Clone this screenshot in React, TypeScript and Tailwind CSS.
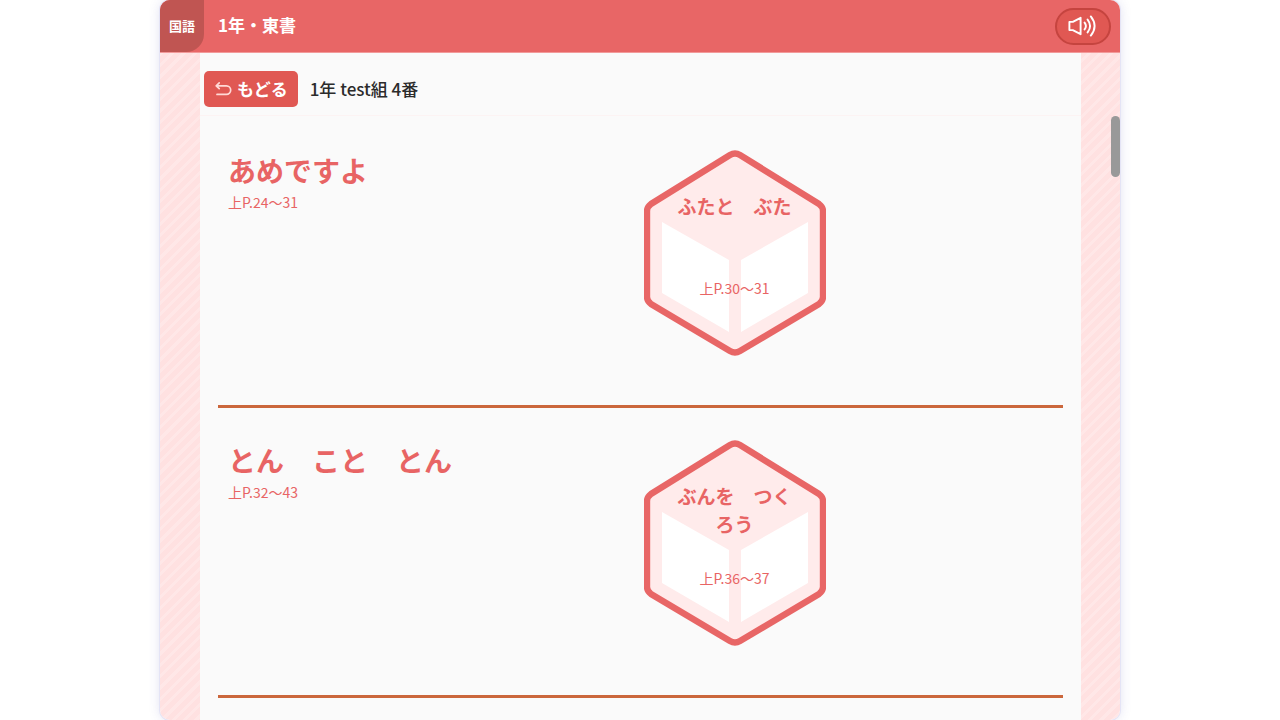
type Lesson = {
  title: string;
  pages: string;
  unit: string;
  unitPages: string;
};

const lessons: Lesson[] = [
  { title: "あめですよ", pages: "上P.24〜31", unit: "ふたと　ぶた", unitPages: "上P.30〜31" },
  { title: "とん　こと　とん", pages: "上P.32〜43", unit: "ぶんを　つくろう", unitPages: "上P.36〜37" },
];

function BackIcon() {
  return (
    <svg aria-hidden="true" viewBox="0 0 18 14" className="h-3.5 w-[18px]" fill="none" stroke="#ffd9d6" strokeWidth="1.7" strokeLinecap="round" strokeLinejoin="round">
      <path d="M5.2 0.9 2.2 3.8 5.2 6.7M2.6 3.8H12.4a4.3 4.3 0 0 1 0 8.6H3" />
    </svg>
  );
}

function SpeakerIcon() {
  return (
    <svg aria-hidden="true" viewBox="0 0 30 22" className="h-[22px] w-[30px]" fill="none" stroke="white" strokeWidth="1.9" strokeLinecap="round" strokeLinejoin="round">
      <path d="M1.4 6.9H4.8L12.6 2.8V19.2L4.8 15.1H1.4Z" />
      <path d="M16.6 7.6Q19.2 11 16.6 14.4M19.6 4.6Q24.6 11 19.6 17.4M22.8 1.4Q30.4 11 22.8 20.6" />
    </svg>
  );
}

function UnitBadge({ unit, pages }: { unit: string; pages: string }) {
  return (
    <a href="#unit" className="grid h-[206px] w-[182px] text-[#e86464]">
      <svg aria-hidden="true" viewBox="0 0 182 206" className="col-start-1 row-start-1 h-full w-full">
        <path
          d="M86 5Q91 2 96 5L175 54Q179 57 179 61V147Q179 151 175 154L96 201Q91 204 86 201L7 154Q3 151 3 147V61Q3 57 7 54Z"
          fill="#ffebeb"
          stroke="#e86666"
          strokeWidth="6.4"
        />
        <path d="M18 72 85 110V182L18 143ZM164 72 97 110V182L164 143Z" fill="white" />
      </svg>
      <span className="z-10 col-start-1 row-start-1 flex flex-col items-center pt-[42px]">
        <span className="h-[84px] w-[120px] text-center text-[19px] leading-7 font-bold">{unit}</span>
        <span className="text-sm leading-6">{pages}</span>
      </span>
    </a>
  );
}

function LessonRow({ lesson }: { lesson: Lesson }) {
  return (
    <section className="grid h-[290px] grid-cols-2 border-b-[3px] border-[#cb673c]">
      <div className="pt-[34px] pl-2.5 text-[#e86464]">
        <h2 className="text-[28px] leading-9 font-bold">{lesson.title}</h2>
        <p className="pt-0.5 text-sm leading-6">{lesson.pages}</p>
      </div>
      <div className="pt-8 pl-[3px]">
        <UnitBadge unit={lesson.unit} pages={lesson.unitPages} />
      </div>
    </section>
  );
}

export default function App() {
  return (
    <div className="h-screen bg-white font-['Noto_Sans_CJK_JP',sans-serif] text-[#2b2b2b]">
      <div className="relative mx-auto flex h-full max-w-[960px] flex-col overflow-hidden rounded-[10px] bg-[repeating-linear-gradient(135deg,#ffe1e1_0px,#ffe1e1_5px,#ffe7e7_5px,#ffe7e7_8px)] shadow-[0_0_0_1px_#e4e4f6,0_0_12px_rgba(80,80,180,0.18)]">
        <header className="flex h-[53px] shrink-0 items-center border-b border-[#f29a9a] bg-[#e86666] pr-[9px] text-white">
          <span className="flex h-full w-11 items-center justify-center rounded-br-[18px] bg-[#c05552] text-[13px] font-bold">国語</span>
          <h1 className="grow pb-0.5 pl-3.5 text-[17px] font-bold">1年・東書</h1>
          <button type="button" aria-label="音声" className="flex h-[37px] w-14 items-center justify-center rounded-full border-2 border-[#c5443f] bg-[#e05853]">
            <SpeakerIcon />
          </button>
        </header>
        <main className="mr-[39px] ml-10 min-h-0 grow overflow-hidden bg-[#fafafa]">
          <div className="flex h-[63px] items-center gap-3 border-b border-[#fcf3f3] pt-2.5 pl-1">
            <button type="button" className="flex h-9 items-center gap-[5px] rounded-[5px] bg-[#e05853] px-2.5 text-[17px] font-bold text-white">
              <BackIcon />
              もどる
            </button>
            <p className="text-[17px] font-medium">1年 test組 4番</p>
          </div>
          <div className="px-[18px] pt-0.5">
            {lessons.map((lesson) => (
              <LessonRow key={lesson.title} lesson={lesson} />
            ))}
          </div>
        </main>
        <div className="absolute top-[116px] right-0 h-[61px] w-[9px] rounded-full bg-[#999999]" />
      </div>
    </div>
  );
}
